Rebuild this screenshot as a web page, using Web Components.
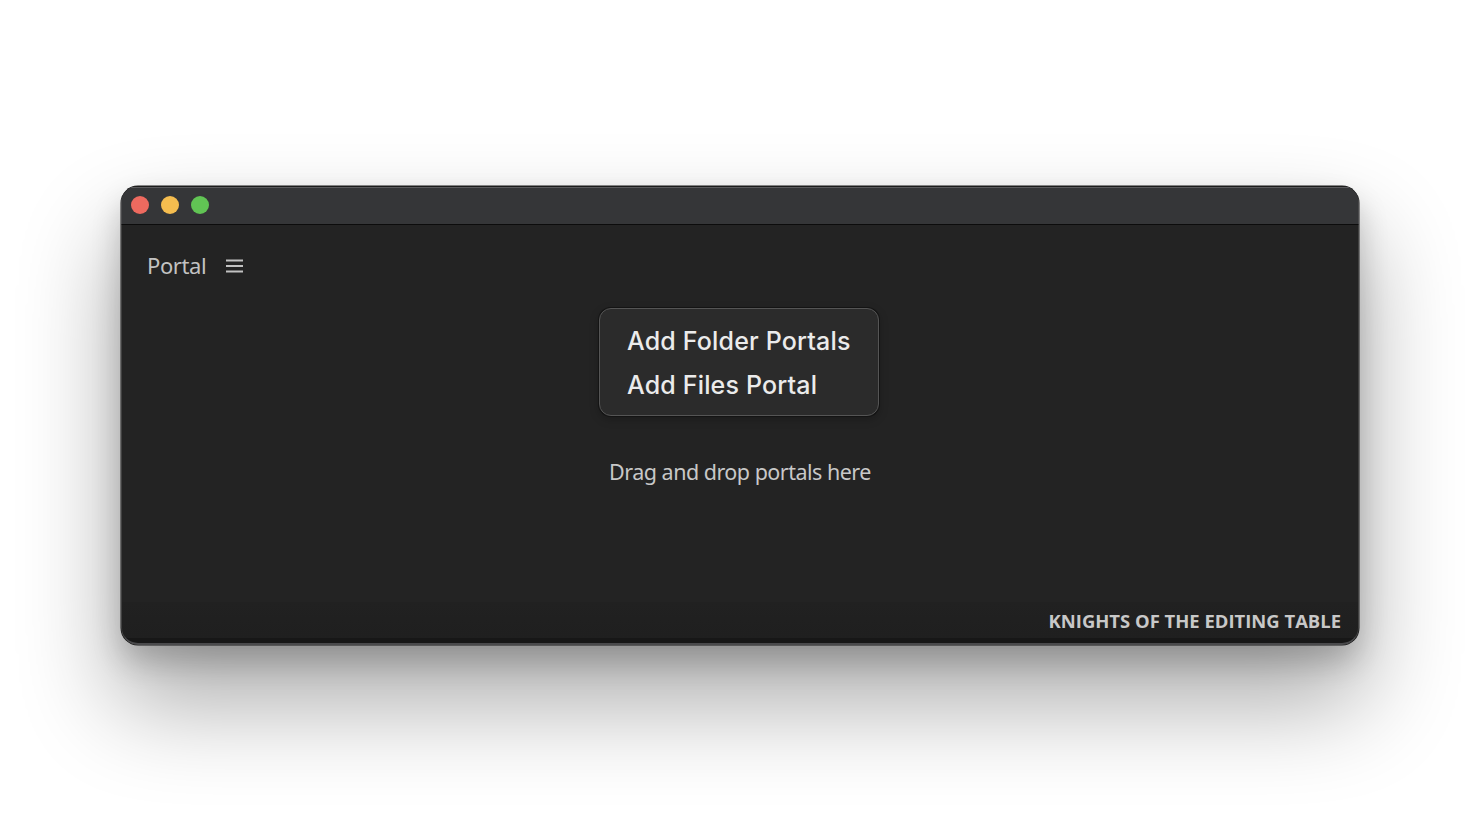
<!DOCTYPE html>
<html>
<head>
<meta charset="utf-8">
<title>Portal</title>
<style>
  html, body { margin: 0; height: 100%; background: #fff; }
  body { display: flex; align-items: center; justify-content: center; height: 832px; overflow: hidden; }
</style>
</head>
<body>
<mac-window>
  <portal-header title-text="Portal"></portal-header>
  <portal-menu>
    <span>Add Folder Portals</span>
    <span>Add Files Portal</span>
  </portal-menu>
  <drop-hint>Drag and drop portals here</drop-hint>
  <brand-footer slot="footer">KNIGHTS OF THE EDITING TABLE</brand-footer>
</mac-window>

<script>
// window frame with the traffic lights
class MacWindow extends HTMLElement {
  constructor() {
    super();
    this.attachShadow({ mode: 'open' });
    this.shadowRoot.innerHTML = `
      <style>
        :host {
          display: flex;
          flex-direction: column;
          box-sizing: border-box;
          width: 1238px;
          height: 459px;
          margin-top: -1px;
          border-radius: 17px;
          background: #232323;
          overflow: hidden;
          box-shadow:
            0 0 0 0.5px #1a1a1a,
            0 54px 96px 6px rgba(0,0,0,.32),
            0 16px 30px rgba(0,0,0,.2);
        }
        .bar {
          flex: none;
          display: flex;
          align-items: center;
          gap: 12px;
          box-sizing: border-box;
          height: 39px;
          padding: 0 0 2px 9px;
          background: #353638;
          box-shadow: inset 0 1px 0 #5a5a5c;
          border-top: 1px solid #1c1c1c;
          border-left: 1px solid #4a4a4c;
          border-right: 1px solid #4a4a4c;
          border-bottom: 1px solid #0c0c0c;
        }
        .dot { width: 18px; height: 18px; border-radius: 50%; }
        .red { background: #ee6a5f; }
        .yellow { background: #f5bd4f; }
        .green { background: #61c454; }
        .body {
          flex: 1;
          display: flex;
          flex-direction: column;
          min-height: 0;
          border-left: 1px solid #404040;
          border-right: 1px solid #404040;
        }
        .foot {
          flex: none;
          display: flex;
          justify-content: flex-end;
          align-items: flex-start;
          box-sizing: border-box;
          height: 43px;
          padding: 5px 17px 0 0;
          background: linear-gradient(#212121, #1f1f1f 36px, #171717 36px);
          border: 1px solid #404040;
          border-top: 0;
          border-bottom: 2px solid #4a4a4c;
          border-radius: 0 0 17px 17px;
        }
      </style>
      <div class="bar">
        <div class="dot red"></div>
        <div class="dot yellow"></div>
        <div class="dot green"></div>
      </div>
      <div class="body"><slot></slot></div>
      <div class="foot"><slot name="footer"></slot></div>
    `;
  }
}
customElements.define('mac-window', MacWindow);

// panel title and the hamburger icon
class PortalHeader extends HTMLElement {
  constructor() {
    super();
    this.attachShadow({ mode: 'open' });
    this.shadowRoot.innerHTML = `
      <style>
        :host {
          display: flex;
          align-items: center;
          gap: 20px;
          height: 28px;
          padding: 27px 0 0 25px;
          font: 22px/28px "Noto Sans", sans-serif;
          letter-spacing: -.4px;
          color: #c2c2c2;
        }
        span { position: relative; top: -1px; }
        svg { display: block; }
      </style>
      <span>${this.getAttribute('title-text') || ''}</span>
      <svg width="17" height="14" viewBox="0 0 17 14" fill="none" stroke="#c2c2c2" stroke-width="1.8">
        <path d="M0 1.5H17M0 7H17M0 12.5H17"/>
      </svg>
    `;
  }
}
customElements.define('portal-header', PortalHeader);

// rounded box with the two add actions
class PortalMenu extends HTMLElement {
  constructor() {
    super();
    this.attachShadow({ mode: 'open' });
    this.shadowRoot.innerHTML = `
      <style>
        :host {
          display: block;
          box-sizing: border-box;
          align-self: center;
          width: 280px;
          height: 108px;
          margin: 28px 0 0 -3px;
          padding: 10px 0 0 27.5px;
          border-radius: 12px;
          background: #2b2b2b;
          border: 1px solid #555;
          box-shadow: 0 0 0 1px #141414, 0 3px 10px rgba(0,0,0,.25);
          font: 450 25px/44px "Inter", sans-serif;
          letter-spacing: .17px;
          color: #ebebeb;
        }
        .col { display: flex; flex-direction: column; white-space: nowrap; }
      </style>
      <div class="col"><slot></slot></div>
    `;
  }
}
customElements.define('portal-menu', PortalMenu);

class DropHint extends HTMLElement {
  constructor() {
    super();
    this.attachShadow({ mode: 'open' });
    this.shadowRoot.innerHTML = `
      <style>
        :host {
          display: block;
          margin-top: 41px;
          text-align: center;
          font: 21.5px/30px "Noto Sans", sans-serif;
          letter-spacing: -.51px;
          color: #c8c8c8;
        }
      </style>
      <slot></slot>
    `;
  }
}
customElements.define('drop-hint', DropHint);

class BrandFooter extends HTMLElement {
  constructor() {
    super();
    this.attachShadow({ mode: 'open' });
    this.shadowRoot.innerHTML = `
      <style>
        :host {
          display: block;
          font: 700 18.45px/28px "Open Sans", sans-serif;
          color: #c8c8c8;
          white-space: nowrap;
        }
      </style>
      <slot></slot>
    `;
  }
}
customElements.define('brand-footer', BrandFooter);
</script>
</body>
</html>
